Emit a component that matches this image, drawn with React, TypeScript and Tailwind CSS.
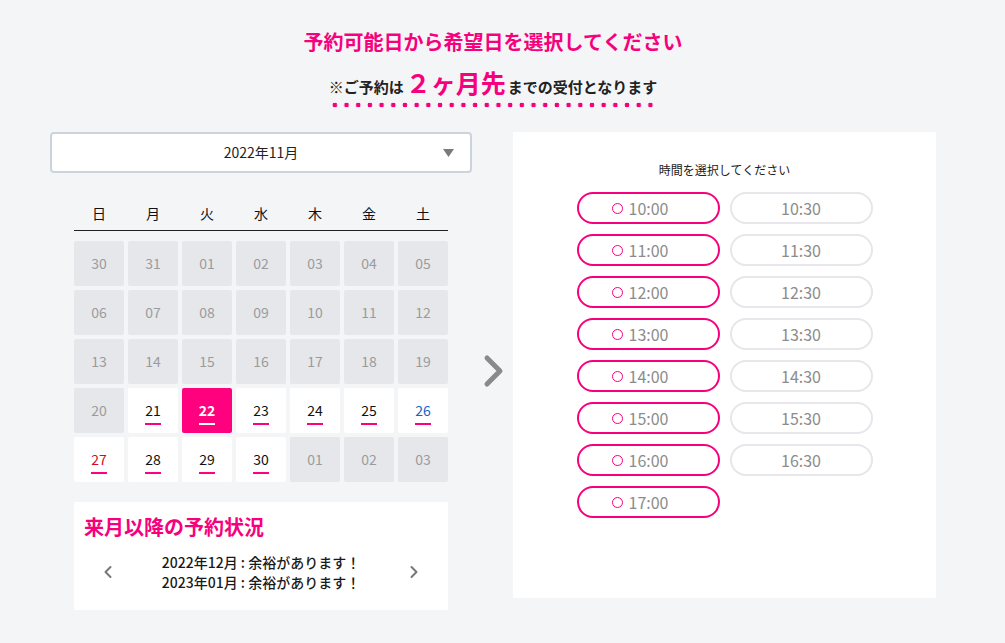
import { ChevronLeft, ChevronRight } from 'lucide-react'

type Day = {
  label: string
  kind: 'off' | 'open' | 'selected'
  color?: string
}

const pink = 'text-[#f7007d]'

const off = (label: string): Day => ({ label, kind: 'off' })
const open = (label: string, color?: string): Day => ({ label, kind: 'open', color })

const weeks: Day[][] = [
  ['30', '31', '01', '02', '03', '04', '05'].map(off),
  ['06', '07', '08', '09', '10', '11', '12'].map(off),
  ['13', '14', '15', '16', '17', '18', '19'].map(off),
  [
    off('20'),
    open('21'),
    { label: '22', kind: 'selected' },
    open('23'),
    open('24'),
    open('25'),
    open('26', 'text-[#1565c0]'),
  ],
  [open('27', 'text-[#cc0f1f]'), open('28'), open('29'), open('30'), off('01'), off('02'), off('03')],
]

const weekdays = ['日', '月', '火', '水', '木', '金', '土']

const slots = [
  { time: '10:00', ok: true },
  { time: '10:30', ok: false },
  { time: '11:00', ok: true },
  { time: '11:30', ok: false },
  { time: '12:00', ok: true },
  { time: '12:30', ok: false },
  { time: '13:00', ok: true },
  { time: '13:30', ok: false },
  { time: '14:00', ok: true },
  { time: '14:30', ok: false },
  { time: '15:00', ok: true },
  { time: '15:30', ok: false },
  { time: '16:00', ok: true },
  { time: '16:30', ok: false },
  { time: '17:00', ok: true },
]

const DayCell = ({ day }: { day: Day }) => {
  if (day.kind === 'off') {
    return (
      <div className="h-[45px] rounded-[2px] bg-[#e6e7eb] flex items-center justify-center text-[14px] text-[#9b9b9b]">
        {day.label}
      </div>
    )
  }
  const selected = day.kind === 'selected'
  return (
    <div
      className={`h-[45px] rounded-[2px] flex flex-col items-center pt-[12px] text-[14px] ${
        selected ? 'bg-[#ff007f] text-white font-bold' : `bg-white ${day.color ?? 'text-[#111]'}`
      }`}
    >
      <span className="leading-[20px]">{day.label}</span>
      <span className={`mt-[3px] h-[2px] w-[16px] ${selected ? 'bg-white' : 'bg-[#ff007f]'}`} />
    </div>
  )
}

export default function App() {
  return (
    <div className="min-h-screen bg-[#f4f5f7] font-['Noto_Sans_CJK_JP','Noto_Sans',sans-serif] text-[#1a1a1a]">
      <div className="w-[886px] ml-[50px] pt-[28px]">
        <h1 className={`text-center text-[20px] leading-[28px] font-bold ${pink}`}>
          予約可能日から希望日を選択してください
        </h1>
        <div className="mt-[10px] flex justify-center">
          <div className="inline-flex flex-col">
            <p className="flex items-baseline font-bold text-[15px] leading-[32px] text-[#222]">
              <span>※ご予約は</span>
              <span className={`text-[25px] mx-[2px] ${pink}`}>２ヶ月先</span>
              <span>までの受付となります</span>
            </p>
            <div className="-mt-[1px] h-[6px] bg-[radial-gradient(circle,#f7007d_2.1px,transparent_2.6px)] bg-[length:11.7px_6px] bg-repeat-x" />
          </div>
        </div>

        <div className="mt-[24px] flex">
          {/* left: calendar */}
          <div className="w-[422px]">
            <div className="h-[41px] rounded-[4px] border-2 border-[#ccd3dd] bg-white flex items-center justify-center relative">
              <span className="text-[14px] text-[#222]">2022年11月</span>
              <svg className="absolute right-[16px] top-[15px]" width="11" height="8" viewBox="0 0 11 8">
                <path d="M0 0 H11 L5.5 8 Z" fill="#7a7a7a" />
              </svg>
            </div>

            <div className="px-[24px]">
              <div className="mt-[23px] h-[35px] border-b border-[#222] grid grid-cols-7 gap-x-[4px] items-center">
                {weekdays.map((w) => (
                  <span key={w} className="text-center text-[14px] leading-[20px] text-[#111]">
                    {w}
                  </span>
                ))}
              </div>

              <div className="mt-[10px] grid grid-cols-7 gap-[4px]">
                {weeks.flat().map((d, i) => (
                  <DayCell key={i} day={d} />
                ))}
              </div>

              <div className="mt-[20px] h-[108px] bg-white px-[10px] pt-[11px]">
                <h2 className={`text-[20px] leading-[28px] font-bold ${pink}`}>来月以降の予約状況</h2>
                <div className="mt-[11px] flex items-center justify-between px-[14px]">
                  <ChevronLeft size={20} strokeWidth={2.4} className="text-[#777]" />
                  <div className="text-center text-[14px] leading-[20px] font-medium">
                    <p>2022年12月 : 余裕があります！</p>
                    <p>2023年01月 : 余裕があります！</p>
                  </div>
                  <ChevronRight size={20} strokeWidth={2.4} className="text-[#777]" />
                </div>
              </div>
            </div>
          </div>

          {/* middle arrow */}
          <div className="w-[41px] flex items-center justify-center pl-[3px]">
            <svg width="22" height="34" viewBox="0 0 22 34">
              <polyline
                points="4,4 17,17 4,30"
                fill="none"
                stroke="#8a8a8a"
                strokeWidth="5"
                strokeLinecap="round"
                strokeLinejoin="round"
              />
            </svg>
          </div>

          {/* right: time slots */}
          <div className="w-[423px] h-[466px] bg-white pt-[29px]">
            <p className="text-center text-[12px] leading-[18px] text-[#222]">時間を選択してください</p>
            <div className="mt-[13px] grid grid-cols-[143px_143px] gap-[10px] justify-center">
              {slots.map((s) =>
                s.ok ? (
                  <div
                    key={s.time}
                    className="h-[32px] rounded-full border-2 border-[#f7007d] flex items-center justify-center pr-[16px] gap-[6px]"
                  >
                    <span className="w-[11px] h-[11px] rounded-full border-[1.5px] border-[#f7007d]" />
                    <span className="text-[16px] text-[#8c8c8c]">{s.time}</span>
                  </div>
                ) : (
                  <div
                    key={s.time}
                    className="h-[32px] rounded-full border-2 border-[#e6e6eb] flex items-center justify-center"
                  >
                    <span className="text-[16px] text-[#8c8c8c]">{s.time}</span>
                  </div>
                ),
              )}
            </div>
          </div>
        </div>
      </div>
    </div>
  )
}
